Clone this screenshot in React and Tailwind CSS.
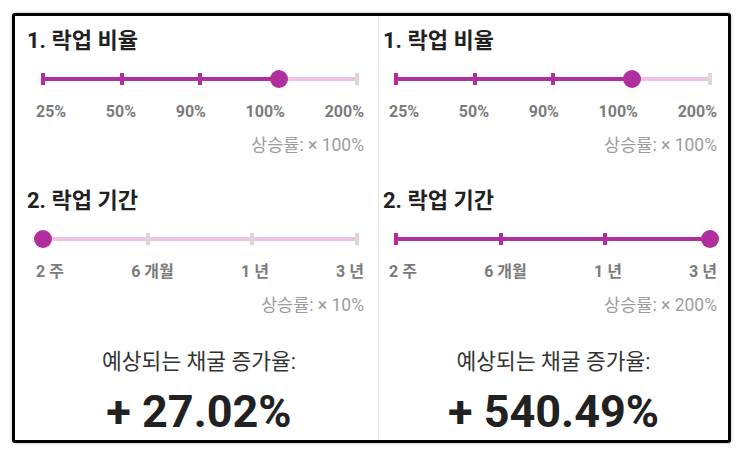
import React from "react";

const PURPLE = "bg-[#b02e9e]";

function Slider({ count, value }) {
  const ticks = Array.from({ length: count }, (_, i) => i);
  const pos = (i) => `${(i / (count - 1)) * 100}%`;
  return (
    <div className="relative h-5 mx-[7px]">
      <div className="absolute left-0 right-0 top-1/2 -translate-y-1/2 h-1 bg-[#ecc4e6]" />
      <div
        className={`absolute left-0 top-1/2 -translate-y-1/2 h-1 ${PURPLE}`}
        style={{ width: pos(value) }}
      />
      {ticks.map((i) =>
        i === value ? null : (
          <div
            key={i}
            className={`absolute top-1/2 -translate-y-1/2 -translate-x-1/2 w-1 h-3 ${
              i < value ? PURPLE : "bg-[#d8d8d8]"
            }`}
            style={{ left: pos(i) }}
          />
        )
      )}
      <div
        className={`absolute top-1/2 -translate-y-1/2 -translate-x-1/2 w-[18px] h-[18px] rounded-full ${PURPLE}`}
        style={{ left: pos(value) }}
      />
    </div>
  );
}

function Section({ title, labels, value, rate, className }) {
  return (
    <div>
      <div className="h-7 leading-7 text-[22px] font-bold text-[#212121]">{title}</div>
      <div className={className}>
        <div className="mt-[14px]">
          <Slider count={labels.length} value={value} />
        </div>
        <div className="mt-[13px] flex justify-between h-5 leading-5 text-[16px] font-bold text-[#7b7b7b]">
          {labels.map((l) => (
            <span key={l}>{l}</span>
          ))}
        </div>
        <div className="mt-[13px] h-5 leading-5 text-right text-[17.5px] text-[#9c9c9c]">
          상승률: × {rate}
        </div>
      </div>
    </div>
  );
}

const ratios = ["25%", "50%", "90%", "100%", "200%"];
const periods = ["2 주", "6 개월", "1 년", "3 년"];

function Panel({ periodValue, periodRate, result, pad, inner, resultPad }) {
  return (
    <div className="h-full flex flex-col pt-[11px]">
      <div className={pad}>
        <Section title="1. 락업 비율" labels={ratios} value={3} rate="100%" className={inner} />
        <div className="mt-8">
          <Section
            title="2. 락업 기간"
            labels={periods}
            value={periodValue}
            rate={periodRate}
            className={inner}
          />
        </div>
      </div>
      <div className={`mt-[33px] text-center ${resultPad}`}>
        <div className="h-7 leading-7 text-[21.5px] text-[#333333]">예상되는 채굴 증가율:</div>
        <div className="mt-[10px] h-[52px] leading-[52px] text-[45px] font-bold text-[#212121]">
          {result}
        </div>
      </div>
    </div>
  );
}

export default function App() {
  return (
    <div className="h-[457px] w-[743px] bg-white pt-[13px] pl-[12px] font-['Roboto','Noto_Sans_CJK_KR',sans-serif]">
      <div className="w-[719px] h-[430px] border-[3px] border-black rounded-[3px] bg-white flex shadow-[0_0_3px_rgba(0,0,0,0.3)]">
        <div className="w-[363px]">
          <Panel
            periodValue={0}
            periodRate="10%"
            result="+ 27.02%"
            pad="pl-[12px] pr-[14px]"
            inner="pl-[9px]"
            resultPad="pl-[5px]"
          />
        </div>
        <div className="w-px bg-[#e6e6e6]" />
        <div className="flex-1">
          <Panel
            periodValue={3}
            periodRate="200%"
            result="+ 540.49%"
            pad="pl-[4px] pr-[11px]"
            inner="pl-[6px]"
            resultPad=""
          />
        </div>
      </div>
    </div>
  );
}
